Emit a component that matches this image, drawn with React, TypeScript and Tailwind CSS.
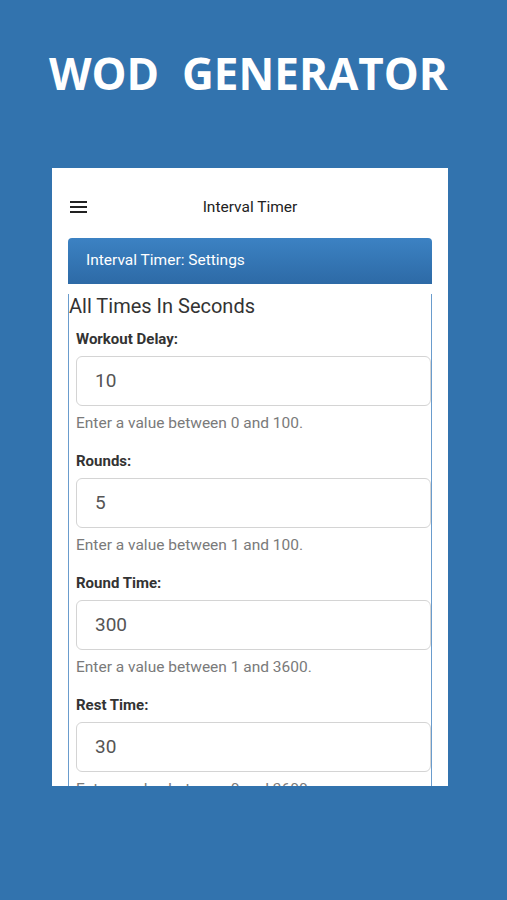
import React from 'react';

interface Field {
  label: string;
  value: string;
  help: string;
}

const fields: Field[] = [
  { label: 'Workout Delay:', value: '10', help: 'Enter a value between 0 and 100.' },
  { label: 'Rounds:', value: '5', help: 'Enter a value between 1 and 100.' },
  { label: 'Round Time:', value: '300', help: 'Enter a value between 1 and 3600.' },
  { label: 'Rest Time:', value: '30', help: 'Enter a value between 0 and 3600.' },
];

export default function App() {
  return (
    <div className="w-full min-h-[900px] bg-[#3273ae] flex flex-col font-['Roboto',sans-serif]">
      <h1 className="mt-[51px] ml-[49px] h-[44px] text-white font-['Open_Sans',sans-serif] font-bold text-[44px] leading-none whitespace-pre">
        WOD  GENERATOR
      </h1>

      <div className="mt-[73px] ml-[52px] w-[396px] h-[618px] bg-white overflow-hidden">
        {/* app bar */}
        <div className="relative h-[24px] mt-[28px] flex items-center justify-center">
          <svg className="absolute left-[18px] top-[4px]" width="18" height="14" viewBox="0 0 18 14">
            <rect x="0" y="1" width="17" height="2" fill="#222" />
            <rect x="0" y="6" width="17" height="2" fill="#222" />
            <rect x="0" y="11" width="17" height="2" fill="#222" />
          </svg>
          <span className="text-[15.5px] text-[#222]">Interval Timer</span>
        </div>

        {/* settings panel */}
        <div className="mx-[16px] mt-[18px]">
          <div className="h-[46px] rounded-t-[4px] bg-gradient-to-b from-[#3c82c3] to-[#2d6aa6] flex items-center pl-[18px]">
            <span className="text-white text-[15.5px]">Interval Timer: Settings</span>
          </div>
          <div className="border-x border-[#6a9ccd] pb-[40px]">
            <h2 className="mt-[10px] text-[20px] leading-[24px] text-[#333]">All Times In Seconds</h2>
            {fields.map((f, i) => (
              <div key={f.label} className={i === 0 ? 'pt-[11px] pl-[7px]' : 'pt-[18px] pl-[7px]'}>
                <div className="text-[15px] leading-[20px] font-bold text-[#333]">{f.label}</div>
                <div className="mt-[7px] h-[50px] rounded-[6px] border border-[#d4d4d4] flex items-center pl-[18px] text-[19px] text-[#555]">
                  {f.value}
                </div>
                <div className="mt-[7px] text-[15.5px] leading-[20px] text-[#7a7a7a]">{f.help}</div>
              </div>
            ))}
          </div>
        </div>
      </div>
    </div>
  );
}
